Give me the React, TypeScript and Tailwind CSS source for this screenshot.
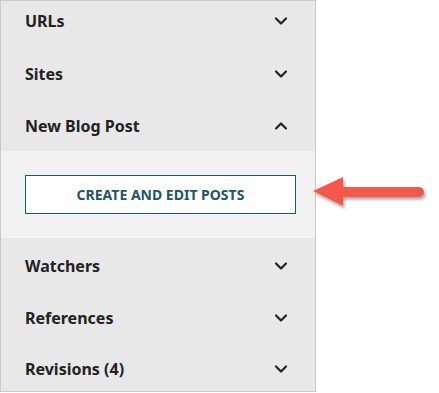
import { ChevronDown, ChevronUp } from "lucide-react";

const font = { fontFamily: '"Noto Sans", "Open Sans", sans-serif' };

function Row({ label, open = false, className = "" }: { label: string; open?: boolean; className?: string }) {
  const Icon = open ? ChevronUp : ChevronDown;
  return (
    <div className={`flex items-center justify-between pl-[24px] pr-[24px] ${className}`}>
      <span className="text-[16px] font-bold text-[#222222]">{label}</span>
      <Icon className="w-[20px] h-[20px] text-[#222222]" strokeWidth={2.6} />
    </div>
  );
}

function Arrow() {
  return (
    <svg width="120" height="40" viewBox="0 0 120 40" className="absolute left-[309px] top-[173px]">
      <defs>
        <filter id="sh" x="-20%" y="-40%" width="140%" height="200%">
          <feDropShadow dx="1.5" dy="2.5" stdDeviation="1.6" floodColor="#000" floodOpacity="0.35" />
        </filter>
      </defs>
      <g filter="url(#sh)" fill="#f5584b">
        <path d="M4 18 L34 4 L34 33 Z" />
        <rect x="30" y="14" width="85" height="10" rx="5" />
      </g>
    </svg>
  );
}

export default function App() {
  return (
    <div className="relative w-[439px] h-[393px] bg-white" style={font}>
      <div className="w-[316px] h-[392px] border border-[#c9c9c9] bg-[#e8e8e8] flex flex-col">
        <Row label="URLs" className="h-[46px] pb-[6px]" />
        <Row label="Sites" className="h-[52px] pt-[1px]" />
        <Row label="New Blog Post" open className="h-[52px] pt-[1px]" />
        <div className="bg-[#f2f2f2] px-[24px] py-[24px]">
          <button className="w-[271px] h-[39px] border border-[#1c5a6a] bg-white text-[14px] font-bold text-[#1f5564]">
            CREATE AND EDIT POSTS
          </button>
        </div>
        <Row label="Watchers" className="h-[52px] pt-[3px]" />
        <Row label="References" className="h-[52px] pt-[3px]" />
        <Row label="Revisions (4)" className="flex-1 pt-[5px]" />
      </div>
      <Arrow />
    </div>
  );
}
